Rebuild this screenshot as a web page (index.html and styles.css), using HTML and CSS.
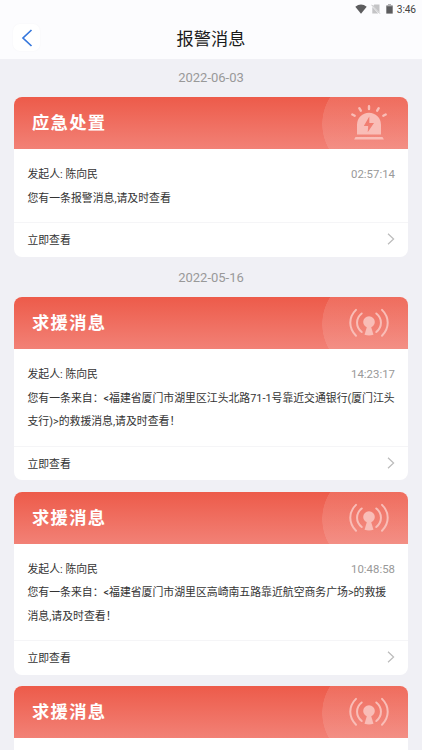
FILE: index.html
```html
<!DOCTYPE html>
<html lang="zh-CN">
<head>
    <meta charset="UTF-8">
    <title>报警消息</title>
    <link rel="stylesheet" href="styles.css">
</head>
<body>
    <svg class="defs" width="0" height="0">
        <symbol id="alarm" viewBox="0 0 38 36">
            <g stroke="currentColor" stroke-width="2.4" stroke-linecap="round">
                <path d="M2.3 9.5l2.4 1.3M9.3 3.2l1.5 2.5M19 1.2v2.8M28.7 3.2l-1.5 2.5M35.7 9.5l-2.4 1.3"/>
            </g>
            <path fill="currentColor" fill-rule="evenodd" d="M7 29.5V19.8a12 12 0 0 1 24 0v9.7zM19.3 11.5L13.8 21h4.4l-.5 6.2L24 18h-4.7z"/>
            <path fill="currentColor" d="M5.5 32h27l1.4 2.6H4.1z"/>
        </symbol>
        <symbol id="signal" viewBox="0 0 40 30">
            <circle cx="20" cy="14" r="5.8" fill="currentColor"/>
            <path fill="currentColor" d="M18.5 17h3l3 9.8q-4.5 1.2-9 0z"/>
            <g fill="none" stroke="currentColor" stroke-width="2" stroke-linecap="round">
                <path d="M12.7 5.5c-6.2 5-6.2 13.3 0 18.5M27.3 5.5c6.2 5 6.2 13.3 0 18.5M7 1.9c-7.6 7.4-7.6 18.2 0 25.8M33 1.9c7.6 7.4 7.6 18.2 0 25.8"/>
            </g>
        </symbol>
        <symbol id="arrow" viewBox="0 0 8 12">
            <path fill="none" stroke="currentColor" stroke-width="1.2" d="M1 .8L6.6 6 1 11.2"/>
        </symbol>
    </svg>
    <div class="header">
        <div class="status">
            <svg width="12" height="10" viewBox="0 0 12 10"><path fill="#5c5c5e" d="M6 9.8L.3 2.7Q6-1.9 11.7 2.7z"/></svg>
            <svg class="sim" width="10" height="10" viewBox="0 0 10 10"><path fill="#c4c4c6" d="M3.3.5h5.2v8L2.2 1.7zM1.3 3l6 6.5h-6z"/><path stroke="#b4b4b6" stroke-width=".9" d="M.5.8l8.4 8.8"/></svg>
            <svg class="battery" width="7" height="10" viewBox="0 0 7 10"><path fill="#b0b0b2" d="M2 0h3v1h1.7v2H.3V1H2z"/><path fill="#5c5c5e" d="M.3 2.3h6.4v7.3H.3z"/></svg>
            <span>3:46</span>
        </div>
        <div class="nav">
            <button class="back"><svg width="12" height="18" viewBox="0 0 12 18"><path fill="none" stroke="#3577dc" stroke-width="1.7" d="M10.5 1L2 9l8.5 8"/></svg></button>
            <h1>报警消息</h1>
        </div>
    </div>
    <div class="list">
        <div class="date">2022-06-03</div>
        <div class="card">
            <div class="banner"><h2>应急处置</h2><svg class="alarm"><use href="#alarm"/></svg></div>
            <div class="content">
                <div class="row"><span>发起人: 陈向民</span><span class="time">02:57:14</span></div>
                <p>您有一条报警消息,请及时查看</p>
            </div>
            <div class="more"><span>立即查看</span><svg class="arrow"><use href="#arrow"/></svg></div>
        </div>
        <div class="date">2022-05-16</div>
        <div class="card">
            <div class="banner"><h2>求援消息</h2><svg class="signal"><use href="#signal"/></svg></div>
            <div class="content">
                <div class="row"><span>发起人: 陈向民</span><span class="time">14:23:17</span></div>
                <p>您有一条来自：&lt;福建省厦门市湖里区江头北路71-1号靠近交通银行(厦门江头<br>支行)&gt;的救援消息,请及时查看！</p>
            </div>
            <div class="more"><span>立即查看</span><svg class="arrow"><use href="#arrow"/></svg></div>
        </div>
        <div class="card">
            <div class="banner"><h2>求援消息</h2><svg class="signal"><use href="#signal"/></svg></div>
            <div class="content">
                <div class="row"><span>发起人: 陈向民</span><span class="time">10:48:58</span></div>
                <p>您有一条来自：&lt;福建省厦门市湖里区高崎南五路靠近航空商务广场&gt;的救援<br>消息,请及时查看！</p>
            </div>
            <div class="more"><span>立即查看</span><svg class="arrow"><use href="#arrow"/></svg></div>
        </div>
        <div class="card">
            <div class="banner"><h2>求援消息</h2><svg class="signal"><use href="#signal"/></svg></div>
            <div class="content"></div>
        </div>
    </div>
</body>
</html>
```
FILE: styles.css
```css
* {
    box-sizing: border-box;
}
body {
    margin: 0;
    height: 750px;
    overflow: hidden;
    background-color: #f0f0f5;
    font-family: Roboto, "Noto Sans CJK SC", sans-serif;
    color: #333;
}
h1, h2, p {
    margin: 0;
}
.defs {
    display: block;
}
.header {
    height: 59px;
    background-color: #fcfcfe;
}
.status {
    display: flex;
    justify-content: flex-end;
    align-items: center;
    height: 18px;
    padding-right: 6px;
    font-size: 10.2px;
    letter-spacing: -0.1px;
    color: #444;
}
.sim {
    margin-left: 4px;
}
.battery {
    margin: 0 4px 0 4.5px;
}
.nav {
    display: grid;
    grid-template-columns: 27px 1fr 27px;
    align-items: center;
    height: 41px;
    padding: 0 13px;
}
.back {
    display: flex;
    align-items: center;
    justify-content: center;
    width: 27px;
    height: 27px;
    margin-top: -2px;
    padding: 0;
    border: none;
    border-radius: 7px;
    background-color: #fff;
    box-shadow: 0 0 2px rgba(0,0,0,0.04);
}
h1 {
    font-size: 17.2px;
    font-weight: 400;
    line-height: 24px;
    text-align: center;
    color: #1a1a1a;
}
.list {
    height: 691px;
    padding: 0 14px;
    overflow: hidden;
}
.date {
    height: 38px;
    line-height: 38px;
    font-size: 13px;
    text-align: center;
    color: #999;
}
.card {
    margin-bottom: 11.5px;
    border-radius: 8px;
    overflow: hidden;
    background-color: #fff;
}
.card + .date {
    margin-top: -9px;
}
.banner {
    display: flex;
    align-items: center;
    justify-content: space-between;
    height: 52px;
    padding: 0 19px 0 18px;
    background: radial-gradient(circle at 358px 27px, rgba(255,255,255,0.11) 49.5px, transparent 50px), linear-gradient(#ed5b4a, #f28176);
    color: #f9bdb7;
}
h2 {
    font-size: 17.3px;
    font-weight: 700;
    line-height: 24px;
    letter-spacing: 1.3px;
    color: #fff;
}
.alarm {
    width: 38px;
    height: 36px;
    margin-right: 1px;
}
.signal {
    width: 40px;
    height: 30px;
}
.content {
    min-height: 72.5px;
    padding: 14px 13px 12px 13.5px;
    font-size: 10.86px;
    line-height: 23.5px;
}
.row {
    display: flex;
    justify-content: space-between;
}
.content p {
    white-space: nowrap;
}
.time {
    font-size: 11.4px;
    color: #999;
}
.more {
    display: flex;
    align-items: center;
    justify-content: space-between;
    height: 34.5px;
    padding: 0 13px 1px 13.5px;
    border-top: 1px solid #f5f5f7;
    font-size: 10.8px;
}
.arrow {
    width: 8px;
    height: 12px;
    color: #bbb;
}
```
